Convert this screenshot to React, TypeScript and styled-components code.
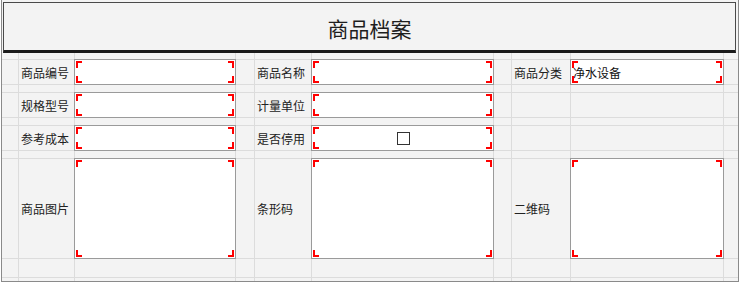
import React from "react";
import styled, { createGlobalStyle } from "styled-components";

const GlobalStyle = createGlobalStyle`
  html, body {
    margin: 0;
    padding: 0;
    background: #ffffff;
  }
  body {
    font-family: "Noto Sans CJK SC", "Noto Sans", sans-serif;
    color: #222222;
  }
`;

type Field = { label: string; kind?: "text" | "check" | "image"; value?: string };

const rows: Field[][] = [
  [
    { label: "商品编号" },
    { label: "商品名称" },
    { label: "商品分类", value: "净水设备" },
  ],
  [{ label: "规格型号" }, { label: "计量单位" }],
  [{ label: "参考成本" }, { label: "是否停用", kind: "check" }],
  [
    { label: "商品图片", kind: "image" },
    { label: "条形码", kind: "image" },
    { label: "二维码", kind: "image" },
  ],
];

const App: React.FC = () => {
  const renderBand = (fields: Field[]) => (
    <>
      <Cell />
      {[0, 1, 2].map((i) => {
        const f = fields[i];
        return (
          <React.Fragment key={i}>
            <Label>{f ? f.label : ""}</Label>
            {f ? (
              <InputCell>
                <InputBox>
                  {f.value && <InputText>{f.value}</InputText>}
                  {f.kind === "check" && <CheckBox />}
                  <Corner $v="top" $h="left" />
                  <Corner $v="top" $h="right" />
                  <Corner $v="bottom" $h="left" />
                  <Corner $v="bottom" $h="right" />
                </InputBox>
              </InputCell>
            ) : (
              <Cell />
            )}
            <Cell />
          </React.Fragment>
        );
      })}
    </>
  );

  const renderBlank = (key: string) => (
    <React.Fragment key={key}>
      {Array.from({ length: 10 }).map((_, i) => (
        <Cell key={i} />
      ))}
    </React.Fragment>
  );

  return (
    <>
      <GlobalStyle />
      <Frame>
        <TitleBar>商品档案</TitleBar>
        <Sheet>
          {renderBlank("top")}
          {rows.map((r, i) => (
            <React.Fragment key={i}>
              {renderBand(r)}
              {i < rows.length - 1 ? renderBlank("gap" + i) : null}
            </React.Fragment>
          ))}
          {renderBlank("tail1")}
          {renderBlank("tail2")}
        </Sheet>
      </Frame>
    </>
  );
};

const Frame = styled.div`
  box-sizing: border-box;
  margin-left: 1px;
  width: 738px;
  height: 282px;
  background: #f3f3f3;
  border-left: 1px solid #8a8a8a;
  border-right: 1px solid #8a8a8a;
  border-bottom: 1px solid #8a8a8a;
  display: flex;
  flex-direction: column;
`;

const TitleBar = styled.div`
  box-sizing: border-box;
  height: 51px;
  margin: 2px 2px 0 1px;
  border: 1px solid #4a4a4a;
  border-bottom: 3px solid #1a1a1a;
  background: #f3f3f3;
  display: flex;
  align-items: center;
  justify-content: center;
  font-size: 21px;
  color: #1e1e1e;
  padding-top: 2px;
`;

const Sheet = styled.div`
  display: grid;
  grid-template-columns: 16px 55px 160px 18px 56px 181px 17px 58px 152px 14px;
  grid-template-rows: 6px 24px 7px 24px 7px 24px 7px 99px 18px 3px;
  gap: 1px;
  background: #dcdcdc;
  flex: 1;
`;

const Cell = styled.div`
  background: #f3f3f3;
`;

const Label = styled.div`
  background: #f3f3f3;
  display: flex;
  align-items: center;
  padding-left: 2px;
  font-size: 12px;
  color: #222222;
  white-space: nowrap;
`;

const InputCell = styled.div`
  background: #f3f3f3;
  display: flex;
`;

const InputBox = styled.div`
  position: relative;
  flex: 1;
  margin: -1px;
  background: #ffffff;
  border: 1px solid #9a9a9a;
  display: flex;
  align-items: center;
  justify-content: center;
`;

const InputText = styled.span`
  position: absolute;
  left: 2px;
  top: 50%;
  transform: translateY(-50%);
  font-size: 12px;
  color: #111111;
`;

const CheckBox = styled.span`
  box-sizing: border-box;
  width: 13px;
  height: 13px;
  border: 1px solid #333333;
  background: #ffffff;
  margin-left: 1px;
`;

const Corner = styled.span<{ $v: "top" | "bottom"; $h: "left" | "right" }>`
  position: absolute;
  width: 6px;
  height: 7px;
  ${(p) => p.$v}: 1px;
  ${(p) => p.$h}: 1px;
  border-${(p) => p.$v}: 2px solid #ff0000;
  border-${(p) => p.$h}: 2px solid #ff0000;
  box-sizing: border-box;
`;

export default App;
